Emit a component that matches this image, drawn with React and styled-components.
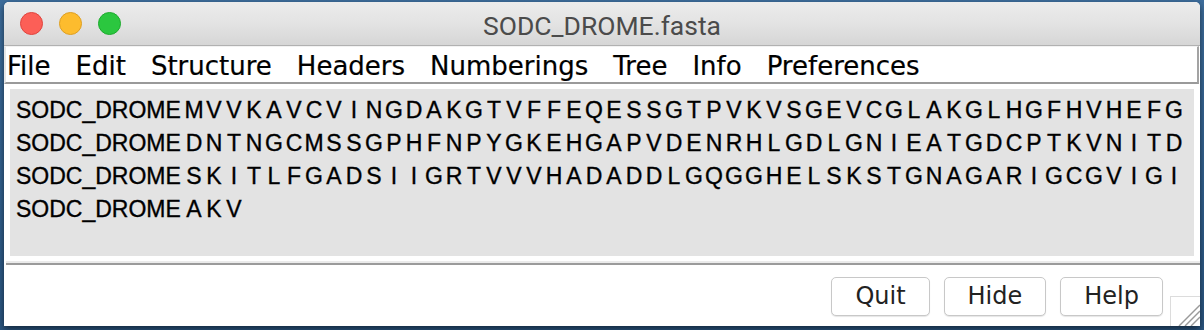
import React from "react";
import styled, { createGlobalStyle } from "styled-components";

const GlobalStyle = createGlobalStyle`
  html, body {
    margin: 0;
    padding: 0;
    background: linear-gradient(180deg, #3d6d9c 0%, #31608e 60%, #2a5580 100%);
    overflow: hidden;
  }
  body {
    padding: 2px 4px 4px 4px;
    width: 1196px;
    height: 330px;
    box-sizing: content-box;
  }
`;

const Window = styled.div`
  width: 1196px;
  height: 324px;
  display: flex;
  flex-direction: column;
  background: #ffffff;
  border-radius: 5px 5px 0 0;
  box-shadow: 0 3px 7px rgba(0, 0, 0, 0.55);
  overflow: hidden;
`;

const TitleBar = styled.div`
  height: 43px;
  display: grid;
  grid-template-columns: 1fr auto 1fr;
  align-items: center;
  background: linear-gradient(180deg, #ececec 0%, #e3e3e3 50%, #d6d6d6 100%);
  border-bottom: 1px solid #b1b1b1;
`;

const Lights = styled.div`
  display: flex;
  gap: 16px;
  padding-left: 16px;
`;

const Light = styled.span`
  width: 23px;
  height: 23px;
  border-radius: 50%;
  box-sizing: border-box;
  background: ${(p) => p.$fill};
  border: 1px solid ${(p) => p.$edge};
`;

const Title = styled.div`
  font-family: Roboto, "Liberation Sans", sans-serif;
  font-size: 26.5px;
  color: #4b4b4b;
  padding-top: 3px;
`;

const MenuBar = styled.div`
  display: flex;
  gap: 25px;
  margin-right: 1px;
  padding-left: 1px;
  padding-top: 4px;
  box-sizing: border-box;
  height: 38px;
  background: #ffffff;
  border-top: 1px solid #f2f2f2;
  border-left: 2px solid #e6e6e6;
  border-right: 2px solid #a3a3a3;
  border-bottom: 2px solid #9a9a9a;
  font-family: "DejaVu Sans", sans-serif;
  font-size: 26px;
  line-height: 30px;
  color: #000;
  -webkit-text-stroke: 0.2px #000;
`;

const MenuItem = styled.span`
  white-space: nowrap;
`;

const Content = styled.div`
  padding: 5px 6px;
`;

const SeqPanel = styled.div`
  height: 167px;
  box-sizing: border-box;
  padding: 5px 0 0 6px;
  background: #e3e3e3;
  font-family: "Liberation Sans", Arial, sans-serif;
  font-size: 23px;
  line-height: 33px;
  color: #000;
  -webkit-text-stroke: 0.35px #000;
`;

const SeqRow = styled.div`
  display: flex;
  height: 33px;
`;

const SeqName = styled.span`
  width: 168px;
  flex: none;
  white-space: nowrap;
`;

const Residue = styled.span`
  width: 20px;
  flex: none;
  text-align: center;
`;

const Separator = styled.div`
  margin-left: 2px;
  height: 2px;
  background: #ebebeb;
  border-bottom: 2px solid #9b9b9b;
`;

const ButtonRow = styled.div`
  flex: 1;
  display: flex;
  justify-content: flex-end;
  align-items: flex-start;
  padding-top: 12px;
`;

const ButtonGroup = styled.div`
  display: flex;
  gap: 14px;
`;

const Button = styled.button`
  height: 39px;
  padding: 0 23px;
  background: #ffffff;
  border: 1px solid #c8c8c8;
  border-radius: 5px;
  box-shadow: 0 1px 1px rgba(0, 0, 0, 0.1);
  font-family: "DejaVu Sans", sans-serif;
  font-size: 24px;
  color: #222;
  line-height: 37px;
`;

const Grip = styled.div`
  align-self: flex-end;
  margin-left: 7px;
  width: 30px;
  height: 30px;
  box-sizing: border-box;
  border-top: 1px solid #dcdcdc;
  border-left: 1px solid #dcdcdc;
  display: flex;
`;

const sequence = [
  "MVVKAVCVINGDAKGTVFFEQESSGTPVKVSGEVCGLAKGLHGFHVHEFG",
  "DNTNGCMSSGPHFNPYGKEHGAPVDENRHLGDLGNIEATGDCPTKVNITD",
  "SKITLFGADSIIGRTVVVHADADDLGQGGHELSKSTGNAGARIGCGVIGI",
  "AKV",
];

const menus = [
  "File",
  "Edit",
  "Structure",
  "Headers",
  "Numberings",
  "Tree",
  "Info",
  "Preferences",
];

export default function App() {
  return (
    <>
      <GlobalStyle />
      <Window>
        <TitleBar>
          <Lights>
            <Light $fill="#fc5f57" $edge="#e0443e" />
            <Light $fill="#fdbc2e" $edge="#de9f22" />
            <Light $fill="#2bc73f" $edge="#1eab2e" />
          </Lights>
          <Title>SODC_DROME.fasta</Title>
          <div />
        </TitleBar>
        <MenuBar>
          {menus.map((m) => (
            <MenuItem key={m}>{m}</MenuItem>
          ))}
        </MenuBar>
        <Content>
          <SeqPanel>
            {sequence.map((line, i) => (
              <SeqRow key={i}>
                <SeqName>SODC_DROME</SeqName>
                {line.split("").map((r, j) => (
                  <Residue key={j}>{r}</Residue>
                ))}
              </SeqRow>
            ))}
          </SeqPanel>
        </Content>
        <Separator />
        <ButtonRow>
          <ButtonGroup>
            <Button>Quit</Button>
            <Button>Hide</Button>
            <Button>Help</Button>
          </ButtonGroup>
          <Grip>
            <svg width="29" height="29" viewBox="0 0 29 29">
              <g stroke="#9a9a9a" strokeWidth="1.4">
                <line x1="8" y1="29" x2="29" y2="8" />
                <line x1="14" y1="29" x2="29" y2="14" />
                <line x1="20" y1="29" x2="29" y2="20" />
              </g>
            </svg>
          </Grip>
        </ButtonRow>
      </Window>
    </>
  );
}
